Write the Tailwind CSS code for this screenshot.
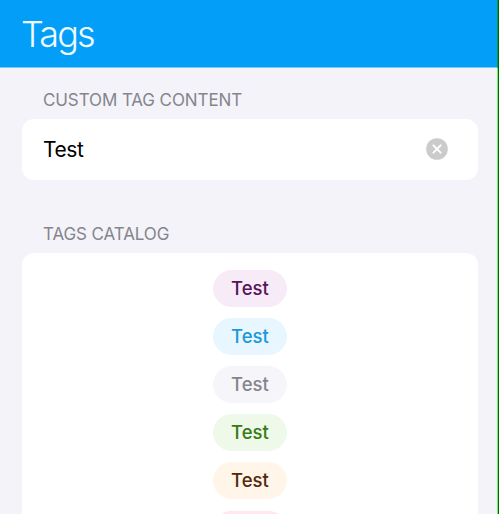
<!DOCTYPE html>
<html lang="en">
<head>
<meta charset="utf-8">
<title>Tags</title>
<script src="https://cdn.jsdelivr.net/npm/@tailwindcss/browser@4"></script>
</head>
<body class="h-[514px] w-[499px] overflow-hidden bg-[#f4f3fa] font-['Inter',sans-serif]">
<div class="flex h-[514px] w-[499px] overflow-hidden">
  <div class="flex min-w-0 flex-1 flex-col">
    <header class="flex h-[68px] shrink-0 items-start border-b border-[#7cc8f8] bg-[#039ef7] pl-[21px]">
      <h1 class="text-[36px] leading-[68px] font-light tracking-[-1.9px] text-[#effaff]">Tags</h1>
    </header>
    <main class="flex flex-col pr-[19px] pl-[22px]">
      <h2 class="mt-[21px] h-[30px] pt-px pl-[21px] text-[17px] leading-[21px] text-[#85858b]"><span class="tracking-[-0.1px]">CUSTOM TAG CONTENT</span></h2>
      <div class="flex h-[60.5px] items-center justify-between rounded-[12px] bg-white pr-[30px] pl-[21px]">
        <span class="pt-px text-[21px] leading-[60px] tracking-[-0.4px] text-black">Test</span>
        <svg class="size-[22px]" viewBox="0 0 22 22" fill="none"><circle cx="11" cy="11" r="10.8" fill="#cbcbcc"/><path d="M7.4 7.4l7.2 7.2M14.6 7.4l-7.2 7.2" stroke="#fff" stroke-width="2" stroke-linecap="round"/></svg>
      </div>
      <h2 class="mt-[43.5px] h-[30px] pt-px pl-[21px] text-[17px] leading-[21px] text-[#85858b]"><span class="tracking-[-0.1px]">TAGS CATALOG</span></h2>
      <div class="flex flex-col items-center gap-[11.2px] rounded-t-[12px] bg-white pt-[16.7px] pb-4 text-[18.5px] leading-[37px] font-medium">
        <span class="h-[37px] w-[74px] rounded-full bg-[#f7ebf7] text-center text-[#551558]">Test</span>
        <span class="h-[37px] w-[74px] rounded-full bg-[#e7f6ff] text-center text-[#1a99dc]">Test</span>
        <span class="h-[37px] w-[74px] rounded-full bg-[#f6f5fa] text-center text-[#85858a]">Test</span>
        <span class="h-[37px] w-[74px] rounded-full bg-[#eef9ea] text-center text-[#367b12]">Test</span>
        <span class="h-[37px] w-[74px] rounded-full bg-[#fff5e9] text-center text-[#51290c]">Test</span>
        <span class="h-[37px] w-[74px] rounded-full bg-[#ffe7ec]"></span>
      </div>
    </main>
  </div>
  <div class="flex w-[2px] shrink-0 flex-col border-r border-[#006400]"><div class="h-[68px] bg-[#00a050]"></div><div class="flex-1 bg-[#66f566]"></div></div>
</div>
</body>
</html>
